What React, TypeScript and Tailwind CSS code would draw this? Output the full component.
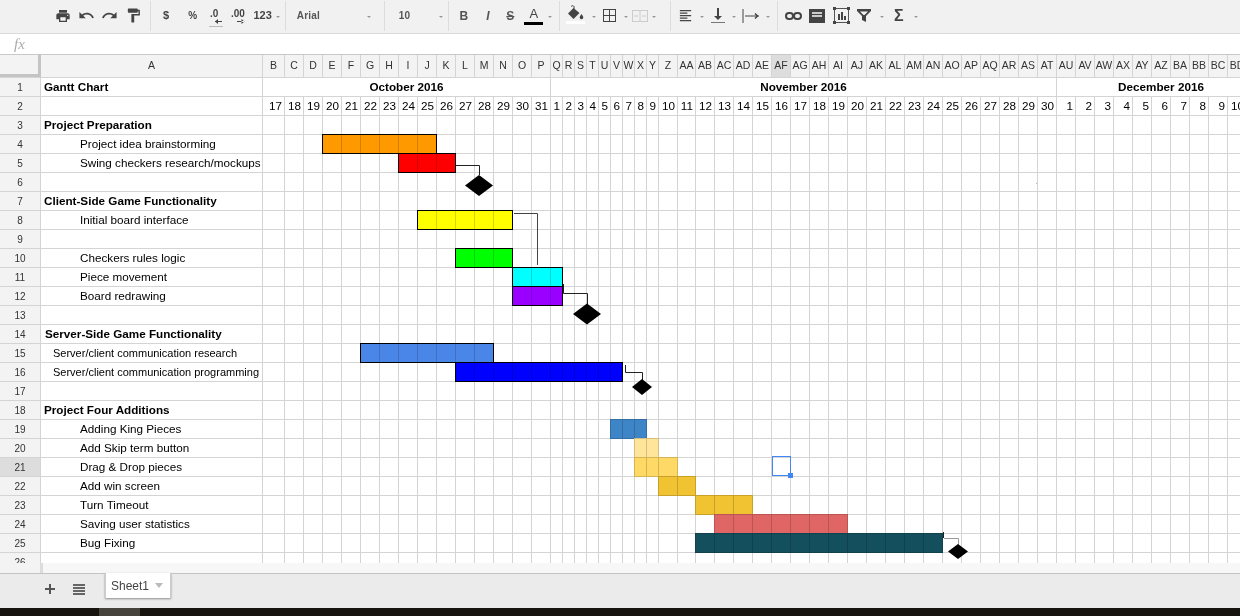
import { MdPrint, MdUndo, MdRedo, MdFormatPaint, MdFormatAlignLeft } from "react-icons/md";

// column letters + widths, same order as the sheet
const colNames = ["A","B","C","D","E","F","G","H","I","J","K","L","M","N","O","P","Q","R","S","T","U","V","W","X","Y","Z",
  "AA","AB","AC","AD","AE","AF","AG","AH","AI","AJ","AK","AL","AM","AN","AO","AP","AQ","AR","AS","AT","AU","AV","AW","AX","AY","AZ","BA","BB","BC","BD"];

function colWidth(i: number) {
  if (i === 0) return 222;
  if (i === 1) return 22;
  if (i >= 16 && i <= 24) return 12;
  if (i === 26) return 18;
  return 19;
}

const days = [
  17,18,19,20,21,22,23,24,25,26,27,28,29,30,31,
  1,2,3,4,5,6,7,8,9,10,11,12,13,14,15,16,17,18,19,20,21,22,23,24,25,26,27,28,29,30,
  1,2,3,4,5,6,7,8,9,10,
];

type Label = { text: string; kind: "bold" | "boldish" | "task" | "small" };
const labels: Record<number, Label> = {
  3: { text: "Project Preparation", kind: "bold" },
  4: { text: "Project idea brainstorming", kind: "task" },
  5: { text: "Swing checkers research/mockups", kind: "task" },
  7: { text: "Client-Side Game Functionality", kind: "bold" },
  8: { text: "Initial board interface", kind: "task" },
  10: { text: "Checkers rules logic", kind: "task" },
  11: { text: "Piece movement", kind: "task" },
  12: { text: "Board redrawing", kind: "task" },
  14: { text: "Server-Side Game Functionality", kind: "boldish" },
  15: { text: "Server/client communication research", kind: "small" },
  16: { text: "Server/client communication programming", kind: "small" },
  18: { text: "Project Four Additions", kind: "bold" },
  19: { text: "Adding King Pieces", kind: "task" },
  20: { text: "Add Skip term button", kind: "task" },
  21: { text: "Drag & Drop pieces", kind: "task" },
  22: { text: "Add win screen", kind: "task" },
  23: { text: "Turn Timeout", kind: "task" },
  24: { text: "Saving user statistics", kind: "task" },
  25: { text: "Bug Fixing", kind: "task" },
};

const labelClass = {
  bold: "pl-[3px] font-bold text-[11.7px]",
  boldish: "pl-[4px] font-bold text-[11.7px]",
  task: "pl-[39px] text-[11.7px]",
  small: "pl-[12px] text-[11px]",
};

// x1, x2, top y, colour, outlined
const bars: [number, number, number, string, boolean][] = [
  [322, 436, 134, "#ff9900", true],
  [398, 455, 153, "#ff0000", true],
  [417, 512, 210, "#ffff00", true],
  [455, 512, 248, "#00ff00", true],
  [512, 562, 267, "#00ffff", true],
  [512, 562, 286, "#9900ff", true],
  [360, 493, 343, "#4a86e8", true],
  [455, 622, 362, "#0000ff", true],
  [610, 647, 419, "#3d85c6", false],
  [634, 659, 438, "#ffe599", false],
  [634, 678, 457, "#ffd966", false],
  [658, 696, 476, "#f1c232", false],
  [695, 753, 495, "#f1c232", false],
  [714, 848, 514, "#e06666", false],
  [695, 943, 533, "#134f5c", false],
];

function Caret() {
  return (
    <span className="w-[12px] h-[24px] flex items-center justify-center shrink-0 pt-[3px]">
      <span className="w-0 h-0 border-x-[2px] border-x-transparent border-t-[2px] border-t-[#999]" />
    </span>
  );
}

function Btn({ children, w = "w-[23.5px]" }: { children: React.ReactNode; w?: string }) {
  return <div className={`${w} h-[24px] flex items-center justify-center shrink-0 text-[#444]`}>{children}</div>;
}

function Sep({ ml }: { ml: string }) {
  return <div className={`${ml} w-px h-[30px] bg-[#dcdcdc] shrink-0`} />;
}

function Toolbar() {
  return (
    <div className="h-[34px] bg-[#f1f1f1] border-b border-[#dadada] flex items-center pl-[51px] pb-[2px] font-['Liberation_Sans',Arial,sans-serif]">
      <Btn><MdPrint size={16} /></Btn>
      <Btn><MdUndo size={17} /></Btn>
      <Btn><MdRedo size={17} /></Btn>
      <Btn><MdFormatPaint size={17} /></Btn>
      <Sep ml="ml-[5px]" />
      <Btn w="w-[30px]"><span className="text-[11px] font-bold">$</span></Btn>
      <Btn><span className="text-[10px] font-bold">%</span></Btn>
      <Btn>
        <svg width="20" height="22" viewBox="0 0 20 22" fill="#444">
          <text x="4" y="12" fontSize="10" fontWeight="700" fontFamily="Liberation Sans">.0</text>
          <path d="M9 16h7v1H9zM9 16.5l3-2.5v5z" />
          <rect x="3" y="21" width="14" height="1" fill="#bbb" />
        </svg>
      </Btn>
      <Btn>
        <svg width="20" height="22" viewBox="0 0 20 22" fill="#444">
          <text x="1" y="12" fontSize="10" fontWeight="700" fontFamily="Liberation Sans">.00</text>
          <path d="M7 16h7v1H7zM14.5 16.5l-3-2.5v5z" />
        </svg>
      </Btn>
      <span className="ml-[2px] text-[11px] font-bold text-[#444]">123</span>
      <Caret />
      <Sep ml="ml-px" />
      <span className="ml-[11px] w-[66px] text-[10px] font-bold text-[#555] tracking-[0.2px]">Arial</span>
      <Caret />
      <Sep ml="ml-[9px]" />
      <span className="ml-[14px] w-[36px] text-[10px] font-bold text-[#555]">10</span>
      <Caret />
      <Sep ml="ml-[1px]" />
      <Btn w="w-[30px]"><span className="text-[12px] font-bold text-[#555]">B</span></Btn>
      <Btn w="w-[18px]"><span className="text-[12px] font-bold italic text-[#555]">I</span></Btn>
      <Btn w="w-[27px]"><span className="text-[12px] font-bold line-through text-[#555]">S</span></Btn>
      <div className="w-[20px] h-[24px] flex flex-col items-center shrink-0 pt-[1px]">
        <span className="text-[13px] leading-[17px] text-[#444]">A</span>
        <div className="w-[19px] h-[3px] bg-black" />
      </div>
      <Caret />
      <Sep ml="ml-[3px]" />
      <div className="w-[24px] h-[24px] flex flex-col items-center shrink-0 ml-[4px] pt-[1px]">
        <svg width="17" height="16" viewBox="0 0 17 16" fill="#444">
          <path d="M6.5 3 1 8.5 6.5 14l6-6z" />
          <path d="M4 1.5c1-1 2.500-1 3 0v3" fill="none" stroke="#444" />
          <path d="M14.500 9c1 1.500 1.800 2.500 1.800 3.500a1.800 1.800 0 0 1-3.600 0c0-1 .8-2 1.800-3.500z" />
        </svg>
        <div className="w-[19px] h-[3px] bg-white" />
      </div>
      <Caret />
      <Btn w="w-[20px]">
        <svg width="13" height="13" viewBox="0 0 13 13" fill="none" stroke="#444">
          <rect x="0.5" y="0.500" width="12" height="12" />
          <path d="M6.500 0v13M0 6.500h13" />
        </svg>
      </Btn>
      <Caret />
      <div className="w-[16px] flex justify-center shrink-0">
        <svg width="16" height="12" viewBox="0 0 16 12" fill="none" stroke="#ccc">
          <rect x="0.5" y="0.5" width="15" height="11" />
          <path d="M8 0v12M2 6h4M10 6h4" />
        </svg>
      </div>
      <Caret />
      <Sep ml="ml-[10px]" />
      <Btn w="w-[25px]"><span className="ml-[4px] flex"><MdFormatAlignLeft size={15} /></span></Btn>
      <Caret />
      <Btn w="w-[20px]">
        <svg width="14" height="15" viewBox="0 0 14 15" fill="#444">
          <rect x="0" y="14" width="14" height="1" fill="#777" />
          <rect x="6" y="0" width="2" height="9" />
          <path d="M3 8h8l-4 4z" />
        </svg>
      </Btn>
      <Caret />
      <Btn w="w-[22px]">
        <svg width="18" height="14" viewBox="0 0 18 14" stroke="#444" fill="none">
          <path d="M1 0v14M3 7h14" />
          <path d="M13 4.500 15.500 7 13 9.500" strokeWidth="1.500" />
        </svg>
      </Btn>
      <Caret />
      <Sep ml="ml-[3px]" />
      <Btn w="w-[26px]">
        <span className="ml-[6px] flex">
          <svg width="17" height="8" viewBox="0 0 17 8" fill="none" stroke="#444" strokeWidth="2">
            <rect x="1" y="1" width="7" height="6" rx="3" />
            <rect x="9" y="1" width="7" height="6" rx="3" />
          </svg>
        </span>
      </Btn>
      <Btn w="w-[26px]">
        <svg width="16" height="14" viewBox="0 0 16 14">
          <rect x="0" y="0" width="16" height="14" fill="#444" />
          <rect x="3" y="3" width="10" height="5" fill="#ccc" />
          <rect x="3" y="5" width="10" height="1" fill="#444" />
        </svg>
      </Btn>
      <Btn w="w-[23px]">
        <svg width="17" height="17" viewBox="0 0 17 17" fill="#444">
          <rect x="1.5" y="1.5" width="14" height="14" fill="none" stroke="#555" />
          <rect x="0" y="0" width="3" height="3" />
          <rect x="14" y="0" width="3" height="3" />
          <rect x="0" y="14" width="3" height="3" />
          <rect x="14" y="14" width="3" height="3" />
          <rect x="5" y="7" width="2" height="6" />
          <rect x="8" y="5" width="2" height="8" />
          <rect x="11" y="9" width="2" height="4" />
        </svg>
      </Btn>
      <Btn w="w-[23px]">
        <svg width="14" height="13" viewBox="0 0 14 13" fill="#444">
          <path d="M0 0h14v2L9 7v6l-4-2V7L0 2zM3 2.500 6.500 6h1L11 2.500z" fillRule="evenodd" />
        </svg>
      </Btn>
      <Caret />
      <Btn w="w-[22px]"><span className="text-[16px] font-bold">Σ</span></Btn>
      <Caret />
    </div>
  );
}

function FormulaBar() {
  return (
    <div className="h-[21px] bg-white flex items-center pl-[14px] border-b border-[#c8c8c8]">
      <span className="text-[15px] italic text-[#aaa] font-['Liberation_Serif',serif]">fx</span>
    </div>
  );
}

function HeaderRow() {
  return (
    <div className="flex h-[23px] w-max border-b border-[#d4d4d4] bg-[#f3f3f3]">
      <div className="w-[41px] shrink-0 border-r-[3px] border-b-[3px] border-[#c4c4c4] h-[22px]" />
      {colNames.map((c, i) => (
        <div
          key={c}
          style={{ width: colWidth(i) }}
          className={`shrink-0 border-r border-[#d4d4d4] flex items-center justify-center text-[10.5px] text-[#333] overflow-hidden ${c === "AF" ? "bg-[#dddddd]" : ""}`}
        >
          {c}
        </div>
      ))}
    </div>
  );
}

function RowHead({ n }: { n: number }) {
  return (
    <div className={`w-[41px] shrink-0 border-r border-[#d4d4d4] flex items-center justify-center text-[10px] text-[#333] ${n === 21 ? "bg-[#dddddd]" : "bg-[#f3f3f3]"}`}>
      {n}
    </div>
  );
}

function MonthRow() {
  const months = [["October 2016", 288], ["November 2016", 506], ["December 2016", 209]] as const;
  return (
    <div className="flex h-[19px] w-max border-b border-[#d4d4d4]">
      <RowHead n={1} />
      <div style={{ width: 222 }} className="shrink-0 border-r border-[#d4d4d4] pl-[3px] font-bold text-[11.7px] leading-[18px]">Gantt Chart</div>
      {months.map(([m, w]) => (
        <div key={m} style={{ width: w }} className="shrink-0 border-r border-[#d4d4d4] text-center font-bold text-[11.7px] leading-[18px]">{m}</div>
      ))}
    </div>
  );
}

function DayRow() {
  return (
    <div className="flex h-[19px] w-max border-b border-[#d4d4d4]">
      <RowHead n={2} />
      <div style={{ width: 222 }} className="shrink-0 border-r border-[#d4d4d4]" />
      {days.map((d, i) => (
        <div
          key={i}
          style={{ width: colWidth(i + 1) }}
          className="shrink-0 border-r border-[#d4d4d4] text-right pr-[2px] text-[11.7px] leading-[18px] whitespace-nowrap"
        >
          {d}
        </div>
      ))}
    </div>
  );
}

function Row({ n }: { n: number }) {
  const label = labels[n];
  return (
    <div className="flex h-[19px] w-max border-b border-[#d4d4d4]">
      <RowHead n={n} />
      {colNames.map((c, i) =>
        i === 0 ? (
          <div key={c} style={{ width: 222 }} className={`shrink-0 border-r border-[#d4d4d4] overflow-hidden whitespace-nowrap leading-[18px] ${label ? labelClass[label.kind] : ""}`}>
            {label?.text}
          </div>
        ) : (
          <div key={c} style={{ width: colWidth(i) }} className="shrink-0 border-r border-[#d4d4d4]" />
        ),
      )}
    </div>
  );
}

function Diamond({ cx, cy, rx, ry }: { cx: number; cy: number; rx: number; ry: number }) {
  return <polygon points={`${cx - rx},${cy} ${cx},${cy - ry} ${cx + rx},${cy} ${cx},${cy + ry}`} fill="#000" />;
}

function Chart() {
  return (
    <svg width="1240" height="508" className="absolute left-0 top-0 pointer-events-none">
      <g transform="translate(0 -55)">
        <g className="mix-blend-multiply">
          {bars.map(([x1, x2, y, color, outlined]) =>
            outlined ? (
              <rect key={x1 + "-" + y} x={x1 + 0.5} y={y + 0.5} width={x2 - x1} height={19} fill={color} stroke="#000" />
            ) : (
              <rect key={x1 + "-" + y} x={x1} y={y} width={x2 - x1} height={20} fill={color} />
            ),
          )}
        </g>
        <g fill="none" stroke="#222">
          <path d="M456 165.5H479.5V175" />
          <path d="M514 213.5H537.5V265" stroke="#444" />
          <path d="M563.5 284V293.5H587.5V304" />
          <path d="M625.5 365V372.5H642.5V380" />
          <path d="M943.5 532V538" />
          <path d="M944 538.5H958.5V545" stroke="#999" />
        </g>
        <Diamond cx={479} cy={185.5} rx={14} ry={10.5} />
        <Diamond cx={587} cy={314} rx={14} ry={10.5} />
        <Diamond cx={642} cy={387} rx={10} ry={8} />
        <Diamond cx={958} cy={551.5} rx={10} ry={7.5} />
        <rect x="1036" y="183" width="1" height="1" fill="#bbb" />
      </g>
    </svg>
  );
}

function Grid() {
  return (
    <div className="relative h-[508px] overflow-hidden bg-white text-black font-['Liberation_Sans',Arial,sans-serif]">
      <HeaderRow />
      <MonthRow />
      <DayRow />
      {Array.from({ length: 24 }, (_, i) => (
        <Row key={i} n={i + 3} />
      ))}
      <Chart />
      {/* selected cell AF21 */}
      <div className="absolute left-[772px] top-[401px] w-[19px] h-[20px] border border-[#4285f4]">
        <div className="absolute -right-[3px] -bottom-[3px] w-[5px] h-[5px] bg-[#4285f4]" />
      </div>
    </div>
  );
}

function Tabs() {
  return (
    <div className="font-['Liberation_Sans',Arial,sans-serif]">
      <div className="h-[10px] bg-[#f7f7f7] flex">
        <div className="w-[40px] bg-[#f3f3f3] border-r-[3px] border-[#dcdcdc] box-content" />
      </div>
      <div className="h-[35px] bg-[#ebebeb] border-t border-[#c4c4c4] flex items-start">
        <span className="ml-[45px] mt-[9px] w-[12px] h-[12px] relative shrink-0">
          <span className="absolute left-0 top-[5px] w-[10px] h-[2px] bg-[#555]" />
          <span className="absolute left-[4px] top-[1px] w-[2px] h-[10px] bg-[#555]" />
        </span>
        <div className="ml-[16px] mt-[10px] w-[12px] flex flex-col gap-[1px] shrink-0">
          <div className="h-[2px] bg-[#666]" />
          <div className="h-[2px] bg-[#666]" />
          <div className="h-[2px] bg-[#666]" />
          <div className="h-[2px] bg-[#666]" />
        </div>
        <div className="ml-[20px] -mt-px h-[25px] w-[66px] bg-white shadow-[0_1px_2px_rgba(0,0,0,0.4)] border-x border-[#ccc] flex items-center pl-[5px] text-[12px] text-[#444] z-10">
          Sheet1
          <span className="ml-[6px] w-0 h-0 border-x-[4px] border-x-transparent border-t-[5px] border-t-[#bbb]" />
        </div>
      </div>
      <div className="h-[8px] bg-[#17140f] flex">
        <div className="ml-[99px] w-[41px] bg-[#46433d]" />
      </div>
    </div>
  );
}

export default function App() {
  return (
    <div className="w-[1240px] h-[616px] overflow-hidden bg-white">
      <Toolbar />
      <FormulaBar />
      <Grid />
      <Tabs />
    </div>
  );
}
